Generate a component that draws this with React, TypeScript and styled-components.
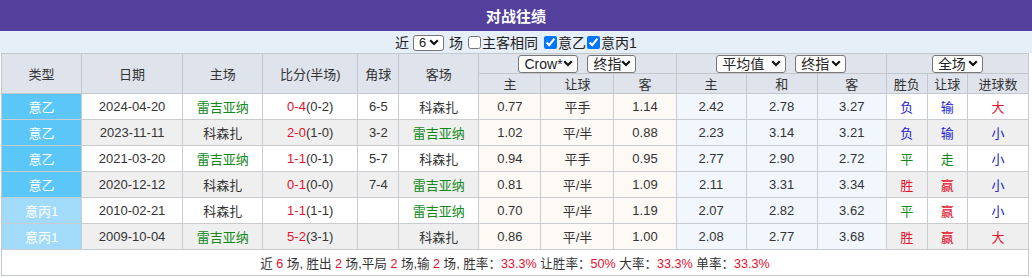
import React from 'react';
import styled, { createGlobalStyle } from 'styled-components';

// Цвета результатов: красный — победа/больше, зелёный — ничья, синий — поражение/меньше.
const RED = '#e5102c';
const GREEN = '#13891a';
const BLUE = '#1c1cc8';

const Global = createGlobalStyle`
  html, body {
    margin: 0;
    padding: 0;
    background: #fff;
  }
  body {
    font-family: "Liberation Sans", "Noto Sans CJK SC", sans-serif;
    color: #333;
  }
`;

type Match = {
  league: string;
  minor?: boolean;
  date: string;
  home: string;
  away: string;
  score: string;
  half: string;
  corner: string;
  odds: [string, string, string];
  avg: [string, string, string];
  result: [string, string, string];
};

const matches: Match[] = [
  { league: '意乙', date: '2024-04-20', home: '雷吉亚纳', away: '科森扎', score: '0-4', half: '(0-2)', corner: '6-5', odds: ['0.77', '平手', '1.14'], avg: ['2.42', '2.78', '3.27'], result: ['负', '输', '大'] },
  { league: '意乙', date: '2023-11-11', home: '科森扎', away: '雷吉亚纳', score: '2-0', half: '(1-0)', corner: '3-2', odds: ['1.02', '平/半', '0.88'], avg: ['2.23', '3.14', '3.21'], result: ['负', '输', '小'] },
  { league: '意乙', date: '2021-03-20', home: '雷吉亚纳', away: '科森扎', score: '1-1', half: '(0-1)', corner: '5-7', odds: ['0.94', '平手', '0.95'], avg: ['2.77', '2.90', '2.72'], result: ['平', '走', '小'] },
  { league: '意乙', date: '2020-12-12', home: '科森扎', away: '雷吉亚纳', score: '0-1', half: '(0-0)', corner: '7-4', odds: ['0.81', '平/半', '1.09'], avg: ['2.11', '3.31', '3.34'], result: ['胜', '赢', '小'] },
  { league: '意丙1', minor: true, date: '2010-02-21', home: '科森扎', away: '雷吉亚纳', score: '1-1', half: '(1-1)', corner: '', odds: ['0.70', '平/半', '1.19'], avg: ['2.07', '2.82', '3.62'], result: ['平', '赢', '小'] },
  { league: '意丙1', minor: true, date: '2009-10-04', home: '雷吉亚纳', away: '科森扎', score: '5-2', half: '(3-1)', corner: '', odds: ['0.86', '平/半', '1.00'], avg: ['2.08', '2.77', '3.68'], result: ['胜', '赢', '大'] },
];

const resultColor: Record<string, string> = {
  胜: RED, 赢: RED, 大: RED,
  平: GREEN, 走: GREEN,
  负: BLUE, 输: BLUE, 小: BLUE,
};

const colWidths = [80, 101, 80, 95, 41, 80, 62, 73, 62, 70, 71, 69, 41, 40, 61];

const Wrap = styled.div`
  width: 1032px;
`;

const TitleBar = styled.div`
  height: 31px;
  line-height: 31px;
  background: #533f9c;
  color: #fff;
  text-align: center;
  font-size: 15px;
  font-weight: bold;
  font-family: "Noto Sans CJK SC", sans-serif;
`;

const FilterBar = styled.div`
  height: 22px;
  background: #e6eef8;
  display: flex;
  justify-content: center;
  align-items: center;
  font-size: 14px;
  color: #222;
  padding-top: 1px;
  box-sizing: border-box;
`;

const FilterLabel = styled.span<{ $gap?: number }>`
  margin-left: ${({ $gap }) => $gap ?? 0}px;
  line-height: 20px;
`;

const CheckBox = styled.span<{ $gap?: number }>`
  display: inline-flex;
  margin-left: ${({ $gap }) => $gap ?? 0}px;
`;

const Check = styled.input`
  width: 13px;
  height: 13px;
  margin: 0 1px 0 0;
  accent-color: #0075ff;
`;

const FakeSelect = styled.span<{ $w: number; $h?: number; $size?: number; $gap?: number }>`
  display: inline-flex;
  align-items: center;
  justify-content: space-between;
  box-sizing: border-box;
  width: ${({ $w }) => $w}px;
  height: ${({ $h }) => $h ?? 18}px;
  margin-left: ${({ $gap }) => $gap ?? 0}px;
  padding: 0 4px 0 5px;
  border: 1px solid #767676;
  border-radius: 3px;
  background: #fff;
  font-size: ${({ $size }) => $size ?? 14}px;
  color: #222;
  line-height: 1;
`;

const SelectGroup = styled.div`
  display: flex;
  justify-content: center;
  align-items: center;
  gap: 9px;
`;

const Table = styled.table`
  margin-left: 1px;
  width: 1028px;
  border-collapse: collapse;
  table-layout: fixed;
  font-size: 12px;
  border: 1px solid #c3c7ce;
`;

const Th = styled.th<{ $h?: number }>`
  background: #dfe4ec;
  border: 1px solid #c3c7ce;
  font-weight: normal;
  font-size: 13px;
  color: #333;
  padding: 0;
  height: ${({ $h }) => $h ?? 19}px;
  text-align: center;
`;

const Td = styled.td<{ $bg: string; $color?: string }>`
  background: ${({ $bg }) => $bg};
  color: ${({ $color }) => $color ?? '#333'};
  border: 1px solid #c8cbd0;
  height: 25px;
  padding: 0;
  text-align: center;
  font-size: 13px;
`;

const LeagueTd = styled(Td)`
  color: #fff;
`;

const Red = styled.span`
  color: ${RED};
`;

const FooterTd = styled.td`
  height: 25px;
  padding: 0;
  text-align: center;
  font-size: 12.6px;
  color: #333;
  background: #fff;
  border: 1px solid #c3c7ce;
`;

function Chevron() {
  return (
    <svg width="10" height="7" viewBox="0 0 10 7">
      <path d="M1.2 1.3 L5 5 L8.8 1.3" fill="none" stroke="#111" strokeWidth="2.2" />
    </svg>
  );
}

function Select({ label, width, height, size, gap }: { label: string; width: number; height?: number; size?: number; gap?: number }) {
  return (
    <FakeSelect $w={width} $h={height} $size={size} $gap={gap}>
      <span>{label}</span>
      <Chevron />
    </FakeSelect>
  );
}

export default function App() {
  return (
    <Wrap>
      <Global />
      <TitleBar>对战往绩</TitleBar>
      <FilterBar>
        <FilterLabel>近</FilterLabel>
        <Select label="6" width={31} height={16} size={13} gap={4} />
        <FilterLabel $gap={5}>场</FilterLabel>
        <CheckBox $gap={5}>
          <Check type="checkbox" readOnly />
        </CheckBox>
        <FilterLabel>主客相同</FilterLabel>
        <CheckBox $gap={6}>
          <Check type="checkbox" checked readOnly />
        </CheckBox>
        <FilterLabel>意乙</FilterLabel>
        <CheckBox $gap={1}>
          <Check type="checkbox" checked readOnly />
        </CheckBox>
        <FilterLabel>意丙1</FilterLabel>
      </FilterBar>
      <Table>
        <colgroup>
          {colWidths.map((w, i) => (
            <col key={i} style={{ width: w }} />
          ))}
        </colgroup>
        <thead>
          <tr>
            <Th rowSpan={2}>类型</Th>
            <Th rowSpan={2}>日期</Th>
            <Th rowSpan={2}>主场</Th>
            <Th rowSpan={2}>比分(半场)</Th>
            <Th rowSpan={2}>角球</Th>
            <Th rowSpan={2}>客场</Th>
            <Th colSpan={3}>
              <SelectGroup>
                <Select label="Crow*" width={60} />
                <Select label="终指" width={49} />
              </SelectGroup>
            </Th>
            <Th colSpan={3}>
              <SelectGroup>
                <Select label="平均值" width={70} />
                <Select label="终指" width={51} />
              </SelectGroup>
            </Th>
            <Th colSpan={3}>
              <SelectGroup>
                <Select label="全场" width={51} />
              </SelectGroup>
            </Th>
          </tr>
          <tr>
            <Th>主</Th>
            <Th>让球</Th>
            <Th>客</Th>
            <Th>主</Th>
            <Th>和</Th>
            <Th>客</Th>
            <Th>胜负</Th>
            <Th>让球</Th>
            <Th>进球数</Th>
          </tr>
        </thead>
        <tbody>
          {matches.map((m, i) => {
            const rowBg = i % 2 === 1 ? '#efefef' : '#fff';
            const homeGreen = m.home === '雷吉亚纳';
            return (
              <tr key={m.date}>
                <LeagueTd $bg={m.minor ? '#a2dbfa' : '#5bc6f8'}>{m.league}</LeagueTd>
                <Td $bg={rowBg}>{m.date}</Td>
                <Td $bg={rowBg} $color={homeGreen ? GREEN : undefined}>{m.home}</Td>
                <Td $bg={rowBg}>
                  <Red>{m.score}</Red>
                  {m.half}
                </Td>
                <Td $bg={rowBg}>{m.corner}</Td>
                <Td $bg={rowBg} $color={homeGreen ? undefined : GREEN}>{m.away}</Td>
                {m.odds.map((v, k) => (
                  <Td key={'o' + k} $bg="#fdf9f4">{v}</Td>
                ))}
                {m.avg.map((v, k) => (
                  <Td key={'a' + k} $bg="#f1f7fc">{v}</Td>
                ))}
                {m.result.map((v, k) => (
                  <Td key={'r' + k} $bg={rowBg} $color={resultColor[v]}>{v}</Td>
                ))}
              </tr>
            );
          })}
          <tr>
            <FooterTd colSpan={15}>
              近 <Red>6</Red> 场, 胜出 <Red>2</Red> 场,平局 <Red>2</Red> 场,输 <Red>2</Red> 场, 胜率：<Red>33.3%</Red>{' '}
              让胜率：<Red>50%</Red> 大率：<Red>33.3%</Red> 单率：<Red>33.3%</Red>
            </FooterTd>
          </tr>
        </tbody>
      </Table>
    </Wrap>
  );
}
